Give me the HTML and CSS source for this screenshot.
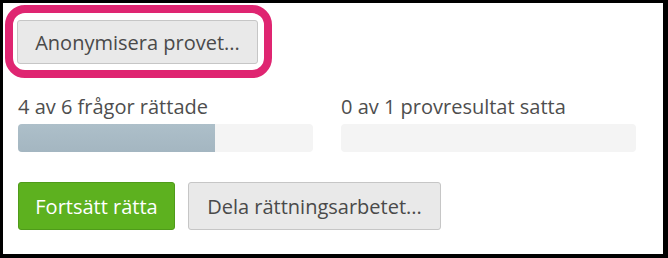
FILE: index.html
```html
<!doctype html>
<html lang="sv">
 <head>
  <meta charset="UTF-8">
  <title>Rättning</title>
  <link rel="stylesheet" href="styles.css">
 </head>
 <body>

	<!-- ram -->
	<div class="frame">

		<!-- markerad knapp -->
		<div class="highlight">
			<button class="btn btn-anon">Anonymisera provet...</button>
		</div>

		<!-- status -->
		<div class="stats">
			<div class="stat">
				<div class="stat-label">4 av 6 frågor rättade</div>
				<div class="bar"><div class="bar-fill" style="width:66.67%"></div></div>
			</div>
			<div class="stat">
				<div class="stat-label">0 av 1 provresultat satta</div>
				<div class="bar"><div class="bar-fill" style="width:0%"></div></div>
			</div>
		</div>

		<!-- knappar -->
		<div class="actions">
			<button class="btn btn-green">Fortsätt rätta</button>
			<button class="btn btn-share">Dela rättningsarbetet...</button>
		</div>

	</div>

 </body>
</html>
```

FILE: styles.css
```css
body
{
	margin:0;
	background:#fff;
	font-family:"Open Sans", "Noto Sans", sans-serif;
}

.frame
{
	width:668px;
	height:258px;
	box-sizing:border-box;
	border-style:solid;
	border-color:#000;
	border-width:3px 5px 4px 3px;
	padding:2px 0 0 14px;
	background:#fff;
}

/* rosa markering runt knappen */
.highlight
{
	display:inline-block;
	margin-left:-12px;
	border:8px solid #df2571;
	border-radius:20px;
	padding:7px 6px 6px 4px;
}

.btn
{
	display:block;
	box-sizing:border-box;
	font-family:"Open Sans", "Noto Sans", sans-serif;
	font-size:20px;
	color:#4a4a4a;
	background:#e9e9e9;
	border:1px solid #c6c6c6;
	border-radius:3px;
	padding:0 8px;
	white-space:nowrap;
	cursor:pointer;
}

.btn-anon
{
	width:241px;
	height:44px;
}

.stats
{
	display:flex;
	gap:28px;
	margin-top:17px;
	padding-left:1px;
}

.stat
{
	width:295px;
}

.stat-label
{
	font-size:20px;
	line-height:24px;
	color:#4e4e4e;
	margin-bottom:5px;
}

.bar
{
	height:28px;
	background:#f4f4f4;
	border-radius:4px;
	overflow:hidden;
}

.bar-fill
{
	height:100%;
	background:linear-gradient(#adbfc9, #a4b6c1);
}

.actions
{
	display:flex;
	gap:13px;
	margin-top:30px;
	padding-left:1px;
}

.actions .btn
{
	height:48px;
}

.btn-green
{
	width:157px;
	background:#5db11f;
	border-color:#4f9b1a;
	color:#fff;
}

.btn-share
{
	width:253px;
}
```
